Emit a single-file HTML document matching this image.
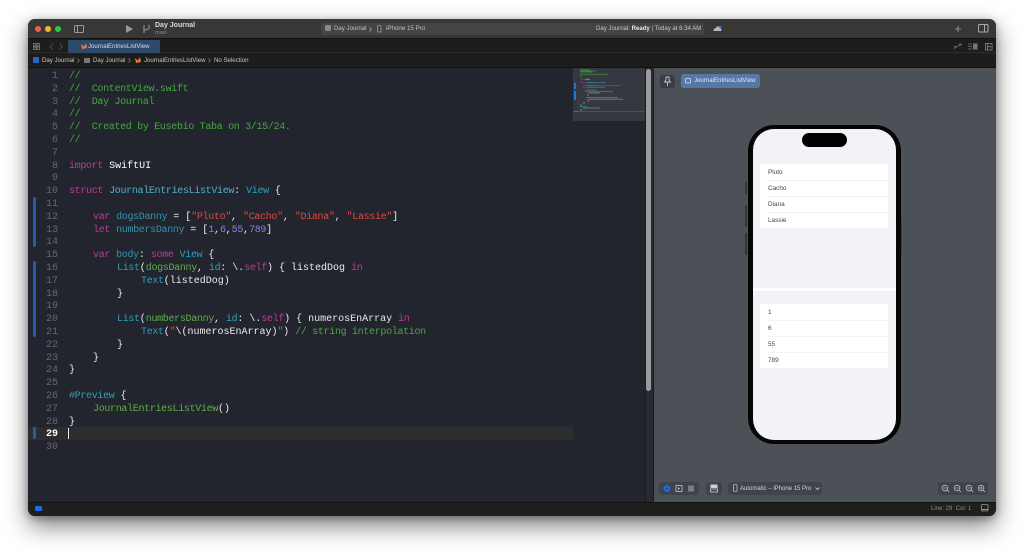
<!DOCTYPE html>
<html><head><meta charset="utf-8">
<style>
html,body{margin:0;padding:0;background:#fff;width:1024px;height:554px;overflow:hidden}
*{box-sizing:border-box}
.a{position:absolute}
body{font-family:"Liberation Sans",sans-serif;color:#c8c8c8}
#win{position:absolute;left:28px;top:19px;width:968px;height:497px;border-radius:7px;background:#1e1e1e;box-shadow:0 10px 24px rgba(0,0,0,.5),0 2px 8px rgba(0,0,0,.3);overflow:hidden}
.t{position:absolute;white-space:nowrap;font-size:6.1px;line-height:8px}
#code div{position:absolute;left:41px;white-space:pre;font:10px/13px "Liberation Mono",monospace;color:#eaeaea}
#nums div{position:absolute;right:0;width:30px;text-align:right;font:10px/13px "Liberation Mono",monospace;color:#646871}
.c,.k,.y,.g,.m,.s,.n,.d,.h{letter-spacing:-.32px}
.c{color:#45a83f}.k{color:#bc3a95}.y{color:#21a3c4}.g{color:#5fae4b}.m{color:#2f93ad}.s{color:#e0483f}.n{color:#8b7fe0}.w{color:#fff}.d{color:#2f9fb8}.h{color:#4eb0cc}
.bar{position:absolute;left:5px;width:3px;background:#1f5fa8;border-radius:1.5px}
.row{position:absolute;left:8px;white-space:nowrap;font-size:6.4px;line-height:16px;color:#444;margin-top:.6px}
.sep{position:absolute;left:8px;right:0;height:1px;background:#f3f3f6}
.pill{position:absolute;background:#3f434a;border-radius:3px}
svg{position:absolute;overflow:visible}
</style></head><body>
<div id="win">
<!-- titlebar -->
<div class="a" style="left:0;top:0;width:968px;height:20px;background:#383736;border-bottom:1px solid #111"></div>
<div class="a" style="left:7px;top:7px;width:6px;height:6px;border-radius:50%;background:#ee5f57"></div>
<div class="a" style="left:17px;top:7px;width:6px;height:6px;border-radius:50%;background:#f5b62e"></div>
<div class="a" style="left:27px;top:7px;width:6px;height:6px;border-radius:50%;background:#2fc541"></div>
<svg style="left:46px;top:6px" width="10" height="8"><rect x=".5" y=".5" width="9" height="7" rx="1" fill="none" stroke="#999"/><path d="M3.5 .5V7.500" stroke="#999"/></svg>
<svg style="left:98px;top:6px" width="8" height="8"><path d="M0 0L7 4L0 8Z" fill="#9a9a9a"/></svg>
<svg style="left:115px;top:6px" width="8" height="9"><path d="M1 0V8M6 0V3Q6 4.500 1 5" fill="none" stroke="#999"/></svg>
<div class="t" style="left:127px;top:2.500px;font-size:7px;font-weight:bold;color:#d8d8d8">Day Journal</div>
<div class="t" style="left:127px;top:10px;font-size:5.500px;color:#8a8a8a">main</div>
<div class="a" style="left:293px;top:4px;width:383px;height:12px;border-radius:3px;background:#454443"></div>
<svg style="left:297px;top:6px" width="7" height="7"><rect width="6" height="6" rx="1" fill="#888"/></svg>
<div class="t" style="left:306px;top:6px;color:#c0c0c0">Day Journal</div>
<svg style="left:341px;top:8px" width="3" height="5"><path d="M.5 .5L2.300 2.500L.5 4.500" fill="none" stroke="#aaa" stroke-width=".7"/></svg>
<svg style="left:349px;top:6px" width="5" height="8"><rect x=".5" y=".5" width="3.500" height="6.500" rx=".8" fill="none" stroke="#999" stroke-width=".8"/></svg>
<div class="t" style="left:358px;top:6px;color:#c0c0c0;font-size:6.2px">iPhone 15 Pro</div>
<div class="t" style="left:568px;top:6px;color:#c8c8c8;font-size:6.050px">Day Journal: <b style="color:#e6e6e6">Ready</b> | Today at 6:34 AM</div>
<svg style="left:685px;top:6px" width="10" height="7"><path d="M.5 6Q.5 3 3 3Q4 .5 6 1.500Q8 2 8 4Q9 5 8 6Z" fill="#b8b8b8"/><circle cx="7.500" cy="2" r="1.300" fill="#1a6cf0"/></svg>
<svg style="left:926px;top:6px" width="8" height="8"><path d="M4 1V7M1 4H7" stroke="#8d8d8d"/></svg>
<svg style="left:950px;top:5px" width="11" height="9"><rect x=".5" y=".5" width="9.500" height="7.500" rx="1" fill="none" stroke="#aaa"/><path d="M6.500 .5V8" stroke="#aaa"/></svg>
<!-- tab bar -->
<div class="a" style="left:0;top:21px;width:968px;height:13px;background:#1d1d1c;border-bottom:1px solid #2c2c2b"></div>
<svg style="left:5px;top:24px" width="7" height="7"><path d="M.5 .5h2.500v2.500h-2.500zM4 .5h2.500v2.500h-2.500zM.5 4h2.500v2.500h-2.500zM4 4h2.500v2.500h-2.500z" fill="none" stroke="#8a8a8a" stroke-width=".7"/></svg>
<svg style="left:21px;top:24px" width="20" height="8"><path d="M4 .5L1 3.500L4 6.500M10.500 .5L13.500 3.500L10.500 6.500" fill="none" stroke="#4e4e4e" stroke-width=".9"/></svg>
<div class="a" style="left:40px;top:21px;width:92px;height:13px;background:#2d4a6d"></div>
<svg style="left:53px;top:24px" width="6" height="6"><path d="M0 1L3 3.500L5 0L6 5L1 6Z" fill="#e8793a"/></svg>
<div class="t" style="left:60px;top:24px;color:#d6dde6">JournalEntriesListView</div>
<svg style="left:925px;top:24px" width="10" height="7"><path d="M1 5.500L8 1M6 1H8V3M1 3.500H3" fill="none" stroke="#777" stroke-width=".8"/></svg>
<svg style="left:940px;top:24px" width="11" height="7"><path d="M0 1H4M0 3.500H4M0 6H4" stroke="#777" stroke-width=".8"/><rect x="5" y="0.500" width="4.500" height="6" fill="#777"/></svg>
<svg style="left:957px;top:24px" width="8" height="8"><rect x=".5" y=".5" width="6.500" height="6.500" fill="none" stroke="#888" stroke-width=".8"/><path d="M2.500 .5V7M2.500 3.700H6" stroke="#888" stroke-width=".8"/></svg>
<!-- breadcrumb -->
<div class="a" style="left:0;top:35px;width:968px;height:14px;background:#1e1d1c;border-bottom:1px solid #111"></div>
<div class="a" style="left:5px;top:38px;width:6px;height:6px;border-radius:1px;background:#2566c8"></div>
<div class="t" style="left:14px;top:37.500px;color:#c4c4c4">Day Journal</div>
<svg style="left:49px;top:39px" width="3" height="5"><path d="M.5 .5L2.300 2.500L.5 4.500" fill="none" stroke="#888" stroke-width=".7"/></svg>
<div class="a" style="left:56px;top:39px;width:6px;height:4.500px;background:#777;border-radius:.5px"></div>
<div class="t" style="left:65px;top:37.500px;color:#c4c4c4">Day Journal</div>
<svg style="left:100px;top:39px" width="3" height="5"><path d="M.5 .5L2.300 2.500L.5 4.500" fill="none" stroke="#888" stroke-width=".7"/></svg>
<svg style="left:107px;top:38px" width="6" height="6"><path d="M0 1L3 3.500L5 0L6 5L1 6Z" fill="#e8793a"/></svg>
<div class="t" style="left:116px;top:37.500px;color:#c4c4c4">JournalEntriesListView</div>
<svg style="left:180px;top:39px" width="3" height="5"><path d="M.5 .5L2.300 2.500L.5 4.500" fill="none" stroke="#888" stroke-width=".7"/></svg>
<div class="t" style="left:186px;top:37.500px;color:#c4c4c4">No Selection</div>
<!-- editor -->
<div class="a" style="left:0;top:49px;width:545px;height:434px;background:#23252e"></div>
<div class="a" style="left:0;top:408px;width:545px;height:13px;background:#2d2d2f"></div>
<div class="a" style="left:40px;top:409px;width:1px;height:11px;background:#e8e8e8"></div>
<div class="bar" style="top:178px;height:50px"></div>
<div class="bar" style="top:242px;height:76px"></div>
<div class="bar" style="top:408px;height:12px"></div>
<div id="nums" class="a" style="left:0;top:51px;width:30px;height:420px">
<div style="top:0">1</div><div style="top:12.800px">2</div><div style="top:25.600px">3</div><div style="top:38.400px">4</div><div style="top:51.200px">5</div><div style="top:64px">6</div><div style="top:76.800px">7</div><div style="top:89.600px">8</div><div style="top:102.400px">9</div><div style="top:115.200px">10</div><div style="top:128px">11</div><div style="top:140.800px">12</div><div style="top:153.600px">13</div><div style="top:166.400px">14</div><div style="top:179.200px">15</div><div style="top:192px">16</div><div style="top:204.800px">17</div><div style="top:217.600px">18</div><div style="top:230.400px">19</div><div style="top:243.200px">20</div><div style="top:256px">21</div><div style="top:268.800px">22</div><div style="top:281.600px">23</div><div style="top:294.400px">24</div><div style="top:307.200px">25</div><div style="top:320px">26</div><div style="top:332.800px">27</div><div style="top:345.600px">28</div><div style="top:358.400px;color:#fff;font-weight:bold">29</div><div style="top:371.200px">30</div>
</div>
<div id="code" class="a" style="left:0;top:51px;width:545px;height:420px">
<div class="c" style="top:0;color:#45a83f">//</div>
<div class="c" style="top:12.800px;color:#45a83f">//  ContentView.swift</div>
<div class="c" style="top:25.600px;color:#45a83f">//  Day Journal</div>
<div class="c" style="top:38.400px;color:#45a83f">//</div>
<div class="c" style="top:51.200px;color:#45a83f">//  Created by Eusebio Taba on 3/15/24.</div>
<div class="c" style="top:64px;color:#45a83f">//</div>
<div style="top:89.600px"><span class="k">import</span> <span class="w">SwiftUI</span></div>
<div style="top:115.200px"><span class="k">struct</span> <span class="h">JournalEntriesListView</span>: <span class="y">View</span> {</div>
<div style="top:140.800px">    <span class="k">var</span> <span class="m">dogsDanny</span> = [<span class="s">"Pluto"</span>, <span class="s">"Cacho"</span>, <span class="s">"Diana"</span>, <span class="s">"Lassie"</span>]</div>
<div style="top:153.600px">    <span class="k">let</span> <span class="m">numbersDanny</span> = [<span class="n">1</span>,<span class="n">6</span>,<span class="n">55</span>,<span class="n">789</span>]</div>
<div style="top:179.200px">    <span class="k">var</span> <span class="m">body</span>: <span class="k">some</span> <span class="y">View</span> {</div>
<div style="top:192px">        <span class="d">List</span>(<span class="g">dogsDanny</span>, <span class="d">id</span>: \.<span class="k">self</span>) { listedDog <span class="k">in</span></div>
<div style="top:204.800px">            <span class="d">Text</span>(listedDog)</div>
<div style="top:217.600px">        }</div>
<div style="top:243.200px">        <span class="d">List</span>(<span class="g">numbersDanny</span>, <span class="d">id</span>: \.<span class="k">self</span>) { numerosEnArray <span class="k">in</span></div>
<div style="top:256px">            <span class="d">Text</span>(<span class="s">"</span>\(numerosEnArray)<span class="s">"</span>) <span class="c">// string interpolation</span></div>
<div style="top:268.800px">        }</div>
<div style="top:281.600px">    }</div>
<div style="top:294.400px">}</div>
<div style="top:320px"><span class="d">#Preview</span> {</div>
<div style="top:332.800px">    <span class="g">JournalEntriesListView</span>()</div>
<div style="top:345.600px">}</div>
</div>
<!-- minimap -->
<div class="a" style="left:545px;top:49px;width:72px;height:434px;background:#23252e"></div>
<div class="a" style="left:545px;top:49px;width:72px;height:53px;background:#353741"></div>
<svg style="left:545px;top:49px" width="72" height="53">
<g stroke-width="1" fill="none" opacity=".85">
<path d="M7 2H17M7 3H23M7 4H19M7 6.300H35M7 8H9" stroke="#3f8f3f"/>
<path d="M7 11.300H12M7 14.600H12M10 17.600H14M10 19.300H14M10 22H14" stroke="#8a3478"/>
<path d="M12 11.300H17" stroke="#999"/><path d="M13 14.600H33M14 17.600H22M14 19.300H32M14 22H24" stroke="#3a8098"/>
<path d="M22 17.600H48" stroke="#a83a42"/>
<path d="M12 23.600H40" stroke="#6f6a80"/><path d="M15 25H27M14 27H16" stroke="#7d8a7d"/>
<path d="M13 29.600H45" stroke="#757a70"/><path d="M15 31.300H50" stroke="#6a8a70"/>
<path d="M14 33H16M10 35H12M7 37H9" stroke="#888"/>
<path d="M7 38.600H14" stroke="#2f8a9a"/><path d="M10 40H27" stroke="#5a9a48"/><path d="M7 42H9" stroke="#888"/>
</g>
<rect x="1" y="15" width="2" height="6" fill="#1f78d8"/><rect x="1" y="23" width="2" height="9" fill="#1f78d8"/>
</svg>
<div class="a" style="left:545px;top:92px;width:72px;height:1px;background:#4c4e58"></div>
<div class="a" style="left:546px;top:92px;width:4px;height:1px;background:#1f78d8"></div>
<!-- scrollbar -->
<div class="a" style="left:617px;top:49px;width:8px;height:434px;background:#2a2b30;border-left:1px solid #1a1a1a"></div>
<div class="a" style="left:618px;top:50px;width:5px;height:322px;background:#9b9b9d;border-radius:2.500px"></div>
<!-- preview -->
<div class="a" style="left:625px;top:49px;width:343px;height:434px;background:#4c5158;border-left:1px solid #1b1b1b"></div>
<div class="a" style="left:632px;top:56px;width:15px;height:13px;background:#3a3d43;border-radius:3px"></div>
<svg style="left:636px;top:58px" width="7" height="9"><path d="M1.500 0H5.500M2 .5V3L.5 5H6.500L5 3V.5M3.500 5V9" fill="none" stroke="#c8c8c8" stroke-width=".9"/></svg>
<div class="a" style="left:653px;top:55px;width:79px;height:14px;background:#5678a6;border-radius:3px"></div>
<svg style="left:657px;top:58px" width="7" height="7"><rect x=".5" y="1.500" width="5" height="4.500" rx="1" fill="none" stroke="#dbe4f0" stroke-width=".8"/></svg>
<div class="t" style="left:666px;top:58px;color:#e4eaf2">JournalEntriesListView</div>
<!-- phone -->
<div class="a" style="left:717px;top:163px;width:2px;height:12px;background:#33363b"></div>
<div class="a" style="left:717px;top:186px;width:2px;height:22px;background:#33363b"></div>
<div class="a" style="left:717px;top:214px;width:2px;height:22px;background:#33363b"></div>
<div class="a" style="left:872px;top:199px;width:2px;height:37px;background:#2a2c30"></div>
<div class="a" style="left:720px;top:106px;width:153px;height:319px;background:#060606;border-radius:26px;box-shadow:0 0 0 .5px #555"></div>
<div class="a" style="left:725px;top:110px;width:143px;height:311px;background:#f2f2f7;border-radius:21px;overflow:hidden">
  <div class="a" style="left:49px;top:4px;width:45px;height:14px;background:#000;border-radius:7px"></div>
  <div class="a" style="left:7px;top:35px;width:128px;height:64px;background:#fff;border-radius:3px">
    <div class="row" style="top:0">Pluto</div><div class="sep" style="top:15.500px"></div>
    <div class="row" style="top:16px">Cacho</div><div class="sep" style="top:31.500px"></div>
    <div class="row" style="top:32px">Diana</div><div class="sep" style="top:47.500px"></div>
    <div class="row" style="top:48px">Lassie</div>
  </div>
  <div class="a" style="left:0;top:159px;width:143px;height:3px;background:#fff"></div>
  <div class="a" style="left:7px;top:175px;width:128px;height:64px;background:#fff;border-radius:3px">
    <div class="row" style="top:0">1</div><div class="sep" style="top:15.500px"></div>
    <div class="row" style="top:16px">6</div><div class="sep" style="top:31.500px"></div>
    <div class="row" style="top:32px">55</div><div class="sep" style="top:47.500px"></div>
    <div class="row" style="top:48px">789</div>
  </div>
</div>
<!-- preview bottom controls -->
<div class="pill" style="left:631px;top:463px;width:40px;height:13px"></div>
<svg style="left:635px;top:465px" width="34" height="9"><circle cx="4" cy="4.500" r="3.300" fill="#1a6cf0"/><circle cx="4" cy="4.500" r="1.300" fill="#3f434a"/><rect x="13" y="1.500" width="6" height="6" fill="none" stroke="#c4c4c4" stroke-width=".8"/><path d="M15 3L17 4.500L15 6Z" fill="#c4c4c4"/><rect x="25" y="1.500" width="6" height="6" fill="#7a7d82"/></svg>
<div class="pill" style="left:678px;top:463px;width:16px;height:13px"></div>
<svg style="left:682px;top:465px" width="9" height="9"><rect x=".5" y=".5" width="7" height="3.500" fill="#d0d0d0"/><rect x=".5" y="5" width="7" height="3" fill="none" stroke="#d0d0d0" stroke-width=".8"/></svg>
<div class="pill" style="left:700px;top:463px;width:94px;height:13px"></div>
<svg style="left:705px;top:465px" width="5" height="9"><rect x=".5" y=".5" width="3.500" height="7" rx=".8" fill="none" stroke="#bbb" stroke-width=".8"/></svg>
<div class="t" style="left:712px;top:466px;color:#d4d4d4;font-size:6px">Automatic – iPhone 15 Pro</div>
<svg style="left:787px;top:468px" width="5" height="4"><path d="M.5 .5L2.500 2.500L4.500 .5" fill="none" stroke="#d4d4d4" stroke-width=".8"/></svg>
<div class="pill" style="left:910px;top:463px;width:50px;height:13px"></div>
<svg style="left:913px;top:465px" width="45" height="9"><g fill="none" stroke="#c4c4c4" stroke-width=".8"><circle cx="4" cy="4" r="2.800"/><path d="M6 6L8 8M2.500 4H5.500"/><circle cx="16" cy="4" r="2.800"/><path d="M18 6L20 8M14.500 4H17.500"/><circle cx="28" cy="4" r="2.800"/><path d="M30 6L32 8M26.500 4H29.500"/><circle cx="40" cy="4" r="2.800"/><path d="M42 6L44 8M38.500 4H41.500M40 2.500V5.500"/></g></svg>
<!-- status bar -->
<div class="a" style="left:0;top:483px;width:968px;height:14px;background:#1f1f1e;border-top:1px solid #111"></div>
<div class="a" style="left:7px;top:487px;width:7px;height:5px;background:#1a6cf0;border-radius:1.500px"></div>
<div class="t" style="left:903px;top:486px;color:#8d8d8d;font-size:6px">Line: 29&nbsp; Col: 1</div>
<svg style="left:953px;top:485px" width="9" height="9"><rect x=".5" y=".5" width="6.500" height="6.500" rx="1" fill="none" stroke="#999" stroke-width=".8"/><path d="M1 5.500H7" stroke="#999"/></svg>
</div>
</body></html>
